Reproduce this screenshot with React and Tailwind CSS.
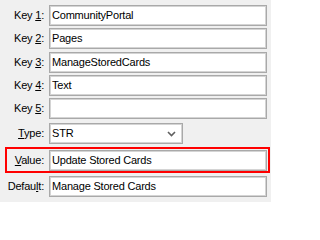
import React from "react";

const font = { fontFamily: '"Liberation Sans", Arial, sans-serif' };

// plain text box like a classic Win32 edit control
const Field = ({ value }) => (
  <div className="w-[218px] h-[21px] bg-white border border-[#a9a9a9] shadow-[inset_0_0_0_1px_#d4d4d4] flex items-center pl-[2px] text-black">
    {value}
  </div>
);

const Row = ({ label, value, className = "" }) => (
  <div className={`flex items-center ${className}`}>
    <div className="w-[44px] text-right whitespace-nowrap">{label}</div>
    <div className="ml-[5px]">
      <Field value={value} />
    </div>
  </div>
);

export default function App() {
  return (
    <div
      className="w-[271px] h-[202px] bg-[#f0f0f0] text-[11px] tracking-[-0.2px] text-black pt-[5px] overflow-hidden"
      style={font}
    >
      <Row label={<>Key <u>1</u>:</>} value="CommunityPortal" />
      <Row label={<>Key <u>2</u>:</>} value="Pages" className="mt-[2px]" />
      <Row label={<>Key <u>3</u>:</>} value="ManageStoredCards" className="mt-[3px]" />
      <Row label={<>Key <u>4</u>:</>} value="Text" className="mt-[2px]" />
      <Row label={<>Key <u>5</u>:</>} value="" className="mt-[2px]" />

      {/* Type dropdown */}
      <div className="flex items-center mt-[4px]">
        <div className="w-[44px] text-right">
          <u>T</u>ype:
        </div>
        <div className="ml-[5px] w-[134px] h-[21px] bg-white border border-[#a9a9a9] shadow-[inset_0_0_0_1px_#d4d4d4] flex items-center justify-between pl-[2px] pr-[6px]">
          <span>STR</span>
          <svg width="9" height="6" viewBox="0 0 9 6">
            <polyline points="1,1 4.5,4.5 8,1" fill="none" stroke="#606060" strokeWidth="1.6" />
          </svg>
        </div>
      </div>

      {/* Highlighted value row */}
      <div className="mt-[3px] ml-[5px] w-[265px] h-[26px] border-2 border-[#ff0000] flex items-center">
        <div className="w-[37px] text-right">
          <u>V</u>alue:
        </div>
        <div className="ml-[5px]">
          <Field value="Update Stored Cards" />
        </div>
      </div>

      <Row label={<>Defau<u>l</u>t:</>} value="Manage Stored Cards" className="mt-[3px]" />
    </div>
  );
}
